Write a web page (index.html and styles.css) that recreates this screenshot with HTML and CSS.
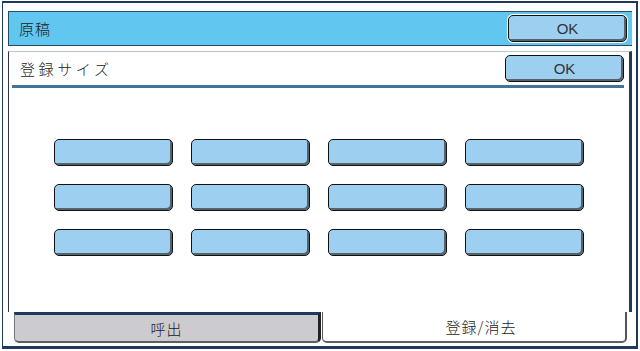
FILE: index.html
```html
<!DOCTYPE html>
<html>
<head>
  <meta charset="utf-8">
  <title>原稿 登録サイズ</title>
  <link rel="stylesheet" href="styles.css">
</head>
<body>
  <div class="frame">
    <!-- title bar -->
    <div class="titlebar">
      <span class="title">原稿</span>
      <button class="btn ok">OK</button>
    </div>

    <!-- main panel -->
    <div class="panel">
      <div class="panel-head">
        <span class="title spaced">登録サイズ</span>
        <button class="btn ok">OK</button>
      </div>
      <div class="grid">
        <button class="btn size"></button>
        <button class="btn size"></button>
        <button class="btn size"></button>
        <button class="btn size"></button>
        <button class="btn size"></button>
        <button class="btn size"></button>
        <button class="btn size"></button>
        <button class="btn size"></button>
        <button class="btn size"></button>
        <button class="btn size"></button>
        <button class="btn size"></button>
        <button class="btn size"></button>
      </div>
    </div>

    <!-- tabs -->
    <div class="tabs">
      <div class="tab">呼出</div>
      <div class="tab active">登録/消去</div>
    </div>
  </div>
</body>
</html>
```

FILE: styles.css
```css
body { margin: 0; background: #fff; font-family: "Noto Sans CJK JP", "DejaVu Sans", sans-serif; color: #1a1a1a; }

.frame { box-sizing: border-box; width: 636px; height: 348px; margin: 1px 0 0 2px;
         border-top: 2px solid #1d3a5a; border-left: 1px solid #1d3a5a; border-right: 2px solid #1d3a5a;
         border-bottom: 3px solid #1d3a5a; box-shadow: 0 2px 0 #9aa4ac;
         padding: 8px 4px 0 5px; display: flex; flex-direction: column; }

.titlebar { box-sizing: border-box; height: 35px; background: #62c7f0; border: 1px solid #2a4a66;
            border-right-width: 0; display: flex; align-items: center; justify-content: space-between;
            padding: 0 5px 0 10px; }
.title { font-size: 15px; letter-spacing: 1px; font-weight: 300; }
.spaced { letter-spacing: 3.6px; }

.btn { font-family: "Liberation Sans", sans-serif; font-size: 15px; color: #333; padding: 0;
       background: #9dd0f0; border: 1px solid #111; border-radius: 5px;
       box-shadow: inset -2px -2px 0 #56636d, 0 0 0 1px #fff; }
.ok { width: 119px; height: 27px; }

.panel { flex: 1; margin-top: 5px; background: #fff; border-top: 1px solid #bcc4cc;
         border-left: 1px solid #334; border-right: 3px solid #1d3a5a; }
.panel-head { height: 33px; margin: 0 5px 0 3px; border-bottom: 3px solid #44739a;
              display: flex; align-items: center; justify-content: space-between; padding-left: 8px; }
.grid { display: grid; grid-template-columns: repeat(4, 119px); column-gap: 18px; row-gap: 18px;
        padding: 51px 0 0 45px; }
.size { height: 27px; }

.tabs { display: flex; height: 31px; margin-bottom: 3px; }
.tab { box-sizing: border-box; display: flex; align-items: center; justify-content: center;
       font-size: 15px; letter-spacing: 1px; font-weight: 300; border-radius: 0 0 5px 5px; }
.tab:first-child { width: 307px; margin-left: 6px; background: #cbcbd0; border-top: 3px solid #1d3a5a;
                   border-right: 3px solid #222; border-bottom: 2px solid #5a6066; border-left: 1px solid #777; }
.tab.active { width: 305px; margin-left: 1px; padding-left: 14px; background: #fff; border-left: 1px solid #555;
              border-right: 2px solid #555; border-bottom: 2px solid #5a6066; }
```
